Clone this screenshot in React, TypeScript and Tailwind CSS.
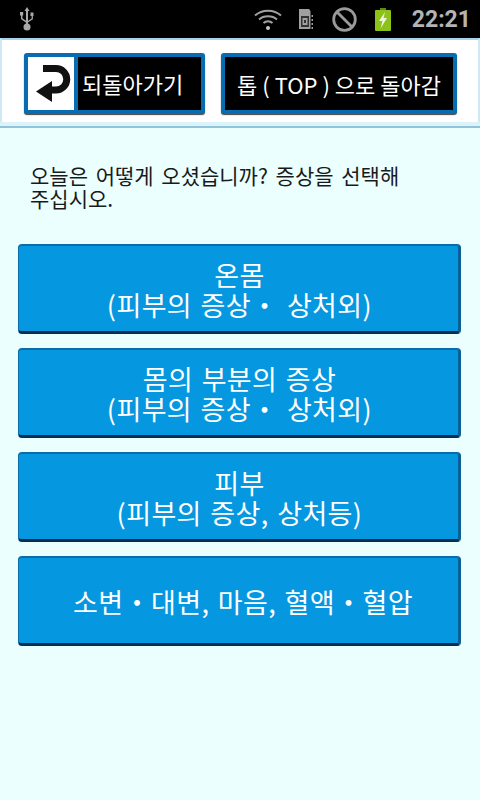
import { Fragment } from "react";

const font = "font-['Noto_Sans_CJK_KR','Noto_Sans_CJK_SC',sans-serif]";

const menu = [
  ["온몸", "(피부의 증상・ 상처외)"],
  ["몸의 부분의 증상", "(피부의 증상・ 상처외)"],
  ["피부", "(피부의 증상, 상처등)"],
  ["소변・대변, 마음, 혈액・혈압"],
];

function StatusBar() {
  return (
    <div className="h-[38px] bg-black flex items-center shrink-0 pl-[19px] pr-[9px]">
      <svg width="16" height="24" viewBox="0 0 16 24" fill="#a8a8a8">
        <path d="M8 0l2.500 4H9v14H7V4H5.500z" />
        <path d="M7.500 16L2 12V8.500H1V5h3.200v3.500H3.400v2.800l4.600 3.300z" />
        <path d="M8 14.500l4.600-3V9h-1.100V5.500h3V9h-.6v3.300L8 16z" />
        <circle cx="8" cy="20" r="3.500" />
      </svg>
      <div className="flex-1" />
      <svg width="28" height="22" viewBox="0 0 28 22" fill="none" stroke="#a0a0a0" strokeWidth="2">
        <path d="M1 7.500C8 1 20 1 27 7.500" />
        <path d="M5 11.500c4.800-4.200 13.200-4.200 18 0" />
        <path d="M9.500 15c2.600-2.200 6.400-2.200 9 0" />
        <circle cx="14" cy="20" r="2" fill="#c8c8c8" stroke="none" />
      </svg>
      <svg className="ml-[17px]" width="14" height="20" viewBox="0 0 14 20">
        <path d="M0 0h10l1.500 2v18H0z" fill="#a0a0a0" />
        <rect x="2" y="7" width="8" height="11" fill="#333" />
        <rect x="3.500" y="9" width="5" height="7" fill="#a0a0a0" />
        <rect x="5" y="11" width="2" height="3" fill="#333" />
        <path d="M12.500 6H14v2h-1.500zM12.500 10H14v2h-1.500zM12.500 14H14v2h-1.500zM12.500 18H14v2h-1.500z" fill="#a0a0a0" />
      </svg>
      <svg className="ml-[19px]" width="25" height="25" viewBox="0 0 25 25" fill="none" stroke="#9a9a9a" strokeWidth="2.800">
        <circle cx="12.500" cy="12.500" r="10.800" />
        <path d="M5 5l15 15" />
      </svg>
      <svg className="ml-[18px]" width="16" height="23" viewBox="0 0 16 23">
        <rect x="5" y="0" width="6" height="3" fill="#5f8a10" />
        <rect x="0" y="2" width="16" height="21" rx="1" fill="#8cc21a" />
        <path d="M10 4L4 13h3.500l-2 7.500L12 10H8.500z" fill="#f0f5e0" />
      </svg>
      <span className="ml-[21px] text-[23px] leading-none font-bold text-[#b4b4b4] font-['Roboto',sans-serif]">22:21</span>
    </div>
  );
}

function Header() {
  return (
    <div className="shrink-0">
      <div className="h-[84px] bg-white border-t-2 border-t-[#a9d3e6] border-x-2 border-x-[#cdeaf4] flex items-start pt-[13px] pl-[22px] pr-[21px] gap-[16px]">
        <button className="w-[181px] h-[61px] rounded-[3px] bg-black border-[4px] border-[#0a6cb0] shadow-[0_1px_1px_#444] flex items-stretch overflow-hidden">
          <div className="w-[46px] bg-white flex items-center justify-center border-r-[4px] border-r-[#0a6cb0] box-content shrink-0">
            <svg width="46" height="53" viewBox="28 57 46 53">
              <path d="M43 68.500H56a10.750 10.750 0 0 1 0 21.500H50" fill="none" stroke="#111" strokeWidth="7" />
              <path d="M36 91.500L52 81v21z" fill="#111" />
            </svg>
          </div>
          <span className="text-white text-[22px] leading-[53px] pl-[4px] whitespace-nowrap">되돌아가기</span>
        </button>
        <button className="w-[236px] h-[61px] rounded-[3px] bg-black border-[4px] border-[#0a6cb0] shadow-[0_1px_1px_#444] flex items-center justify-center">
          <span className="text-white text-[22px] leading-none whitespace-nowrap">톱 ( TOP ) 으로 돌아감</span>
        </button>
      </div>
      <div className="h-[4px] bg-[#dcf3fa]" />
      <div className="h-[2px] bg-[#8fc4dc]" />
    </div>
  );
}

export default function App() {
  return (
    <div className={`${font} w-[480px] h-[800px] bg-[#ecffff] flex flex-col overflow-hidden`}>
      <StatusBar />
      <Header />
      <p className="pl-[30px] pr-[60px] pt-[36px] text-[21px] leading-[23px] [word-spacing:3px] text-[#1a1a1a] break-keep">
        오늘은 어떻게 오셨습니까? 증상을 선택해 주십시오.
      </p>
      <div className="flex flex-col gap-[14px] mt-[34px] pl-[18px] pr-[19px]">
        {menu.map((lines) => (
          <button
            key={lines.join()}
            className={`h-[90px] pt-[2px] ${lines.length === 1 ? "pl-[9px]" : "pl-[2px]"} rounded-[4px] bg-[#0597e0] border border-[#0a6cab] border-t-2 border-b-[3px] border-b-[#04304f] border-r-[3px] border-r-[#0a5f94] text-white text-[27px] leading-[30px] tracking-[0.4px] [word-spacing:2px] text-center`}
          >
            {lines.map((line, i) => (
              <Fragment key={i}>
                {i > 0 && <br />}
                {line}
              </Fragment>
            ))}
          </button>
        ))}
      </div>
    </div>
  );
}
